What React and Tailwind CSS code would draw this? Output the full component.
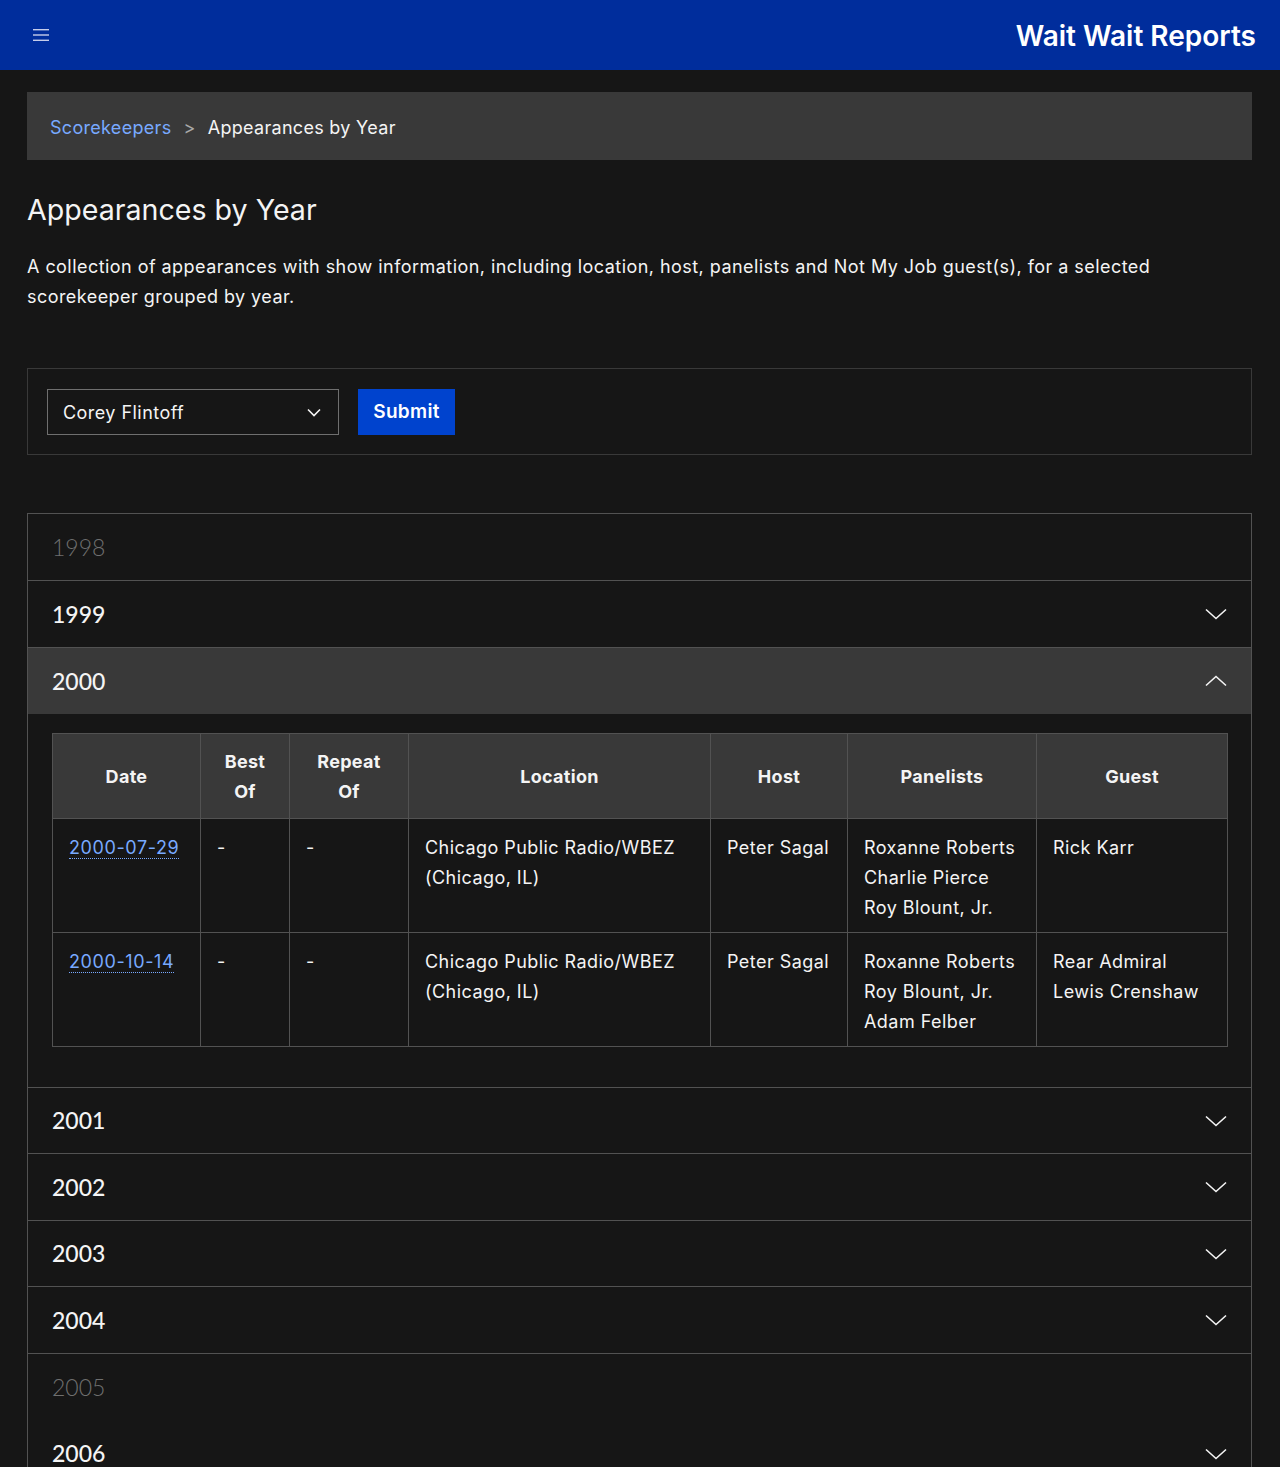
import React from "react";

const body = { fontFamily: 'Inter, "Noto Sans", "Liberation Sans", sans-serif' };
const yearFont = { fontFamily: 'Lato, "Noto Sans", sans-serif' };

function ChevronDown() {
  return (
    <svg width="22" height="12" viewBox="0 0 22 12" fill="none" className="block">
      <path d="M1 1.5 L11 10.5 L21 1.5" stroke="#f4f4f4" strokeWidth="1.6" />
    </svg>
  );
}
function ChevronUp() {
  return (
    <svg width="22" height="12" viewBox="0 0 22 12" fill="none" className="block">
      <path d="M1 10.5 L11 1.5 L21 10.5" stroke="#f4f4f4" strokeWidth="1.6" />
    </svg>
  );
}

function YearRow({ year, disabled, open, noBorder, short }) {
  return (
    <div
      className={
        (short ? "h-[66px] " : "h-[67px] ") +
        "flex items-center justify-between pl-[24px] pr-[24px] " +
        (noBorder ? "" : "border-t border-[#525252] ") +
        (open ? "bg-[#393939]" : "")
      }
    >
      <span
        style={yearFont}
        className={
          "text-[23px] leading-none " +
          (disabled ? "text-[#6f6f6f] font-light" : "text-[#f4f4f4] font-medium")
        }
      >
        {year}
      </span>
      {!disabled && (open ? <ChevronUp /> : <ChevronDown />)}
    </div>
  );
}

const rows = [
  {
    date: "2000-07-29",
    location: ["Chicago Public Radio/WBEZ", "(Chicago, IL)"],
    host: "Peter Sagal",
    panelists: ["Roxanne Roberts", "Charlie Pierce", "Roy Blount, Jr."],
    guest: ["Rick Karr"],
  },
  {
    date: "2000-10-14",
    location: ["Chicago Public Radio/WBEZ", "(Chicago, IL)"],
    host: "Peter Sagal",
    panelists: ["Roxanne Roberts", "Roy Blount, Jr.", "Adam Felber"],
    guest: ["Rear Admiral", "Lewis Crenshaw"],
  },
];

function Table() {
  const th = "border border-[#525252] px-[16px] pt-[12px] pb-[10px] font-bold text-center align-middle tracking-[0.3px]";
  const td = "border border-[#525252] px-[16px] pt-[14px] pb-[9px] align-top tracking-[0.45px]";
  return (
    <table className="w-full table-fixed border-collapse text-[18px] leading-[30px] text-[#f4f4f4]">
      <colgroup>
        <col style={{ width: 148 }} />
        <col style={{ width: 89 }} />
        <col style={{ width: 119 }} />
        <col style={{ width: 302 }} />
        <col style={{ width: 137 }} />
        <col style={{ width: 189 }} />
        <col style={{ width: 191 }} />
      </colgroup>
      <thead>
        <tr className="bg-[#393939] h-[85px]">
          <th className={th}>Date</th>
          <th className={th}>Best Of</th>
          <th className={th}>Repeat Of</th>
          <th className={th}>Location</th>
          <th className={th}>Host</th>
          <th className={th}>Panelists</th>
          <th className={th}>Guest</th>
        </tr>
      </thead>
      <tbody>
        {rows.map((r) => (
          <tr key={r.date} className="h-[113px]">
            <td className={td}>
              <a className="text-[#78a9ff] border-b border-dotted border-[#78a9ff] tracking-[0.6px]">{r.date}</a>
            </td>
            <td className={td}>-</td>
            <td className={td}>-</td>
            <td className={td}>
              {r.location.map((l) => (
                <div key={l}>{l}</div>
              ))}
            </td>
            <td className={td}>{r.host}</td>
            <td className={td}>
              {r.panelists.map((p) => (
                <div key={p}>{p}</div>
              ))}
            </td>
            <td className={td}>
              {r.guest.map((g) => (
                <div key={g}>{g}</div>
              ))}
            </td>
          </tr>
        ))}
      </tbody>
    </table>
  );
}

export default function App() {
  return (
    <div style={body} className="min-h-[1467px] bg-[#161616] text-[#f4f4f4]">
      <header className="h-[70px] bg-[#002d9c] flex items-center justify-between pl-[33px] pr-[24px]">
        <svg width="16" height="14" viewBox="0 0 16 14" className="block">
          <rect x="0" y="1" width="16" height="1.4" fill="#c6cdea" />
          <rect x="0" y="6.3" width="16" height="1.4" fill="#c6cdea" />
          <rect x="0" y="11.6" width="16" height="1.4" fill="#c6cdea" />
        </svg>
        <div className="text-[28px] font-semibold text-white pt-[1px]">Wait Wait Reports</div>
      </header>

      <main className="pl-[27px] pr-[28px] pt-[22px]">
        <nav className="h-[68px] bg-[#393939] flex items-center pl-[23px] pt-[2px] text-[18px] tracking-[0.3px]">
          <a className="text-[#78a9ff]">Scorekeepers</a>
          <span className="text-[#a8a8a8] mx-[12px]">&gt;</span>
          <span className="text-[#f4f4f4]">Appearances by Year</span>
        </nav>

        <h1 className="mt-[30px] text-[28.6px] leading-[40px] font-normal">Appearances by Year</h1>
        <p className="mt-[22px] text-[18px] leading-[30px] max-w-[1180px] tracking-[0.45px]">
          A collection of appearances with show information, including location, host, panelists and Not My Job guest(s), for a selected scorekeeper grouped by year.
        </p>

        <div className="mt-[56px] h-[87px] border border-[#393939] flex items-center pl-[19px] gap-[19px]">
          <div className="w-[292px] h-[46px] border border-[#6f6f6f] flex items-center justify-between pl-[15px] pr-[17px] pt-[1px] text-[18px] tracking-[0.45px]">
            <span>Corey Flintoff</span>
            <svg width="14" height="9" viewBox="0 0 14 9" fill="none" className="block">
              <path d="M1 1.5 L7 7.5 L13 1.5" stroke="#f4f4f4" strokeWidth="1.6" />
            </svg>
          </div>
          <button className="h-[46px] w-[97px] bg-[#0043ce] text-white text-[19px] font-semibold pt-[2px] tracking-[0.3px]">Submit</button>
        </div>

        <div className="mt-[58px] border-x border-[#525252]">
          <YearRow year="1998" disabled />
          <YearRow year="1999" />
          <YearRow year="2000" open />
          <div className="pt-[19px] pb-[40px] px-[24px]">
            <Table />
          </div>
          <YearRow year="2001" short />
          <YearRow year="2002" />
          <YearRow year="2003" short />
          <YearRow year="2004" />
          <YearRow year="2005" disabled />
          <YearRow year="2006" noBorder />
        </div>
      </main>
    </div>
  );
}
